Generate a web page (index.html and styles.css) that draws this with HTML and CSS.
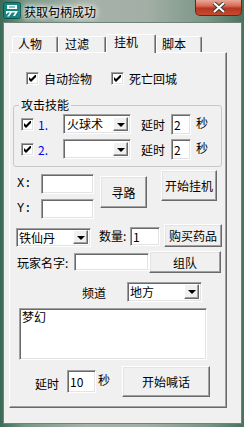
FILE: index.html
```html
<!DOCTYPE html>
<html lang="zh-CN">
<head>
    <meta charset="UTF-8">
    <title>获取句柄成功</title>
    <link rel="stylesheet" href="styles.css">
</head>
<body>
<div class="window">
    <div class="titlebar">
        <svg class="app-icon" viewBox="0 0 18 17">
            <rect x="0.5" y="0.5" width="17" height="16" rx="2" fill="#13857f" stroke="#0b5552"/>
            <path d="M4 3 H14 V7 H4 Z M6 4.5 V5.5 H12 V4.5 Z" fill="#fff" fill-rule="evenodd"/>
            <path d="M3 9 H15 L12 14 H10 L12 10.5 H9 L6 14.5 H4 L7 10.5 H5 L3 12.5 Z" fill="#fff"/>
        </svg>
        <span class="title">获取句柄成功</span>
        <div class="close-btn">
            <svg viewBox="0 0 14 11" width="14" height="11">
                <path d="M2 1 L12 10 M12 1 L2 10" stroke="#3a3a3a" stroke-width="4"/>
                <path d="M2 1 L12 10 M12 1 L2 10" stroke="#fff" stroke-width="2"/>
            </svg>
        </div>
    </div>

    <div class="client">
        <div class="tabs">
            <div class="tab">人物</div>
            <div class="tab tab-wide">过滤</div>
            <div class="tab active">挂机</div>
            <div class="tab">脚本</div>
        </div>

        <div class="panel">
            <div class="opt-row">
                <label class="check first"><span class="box"><svg class="tick" viewBox="0 0 7 7"><polygon points="0,2 2,4 7,-1 7,2 2,7 0,5"/></svg></span>自动捡物</label>
                <label class="check"><span class="box"><svg class="tick" viewBox="0 0 7 7"><polygon points="0,2 2,4 7,-1 7,2 2,7 0,5"/></svg></span>死亡回城</label>
            </div>

            <fieldset class="group">
                <legend>攻击技能</legend>
                <div class="skill-row">
                    <span class="box"><svg class="tick" viewBox="0 0 7 7"><polygon points="0,2 2,4 7,-1 7,2 2,7 0,5"/></svg></span>
                    <span class="num">1.</span>
                    <div class="combo skill-combo"><span class="combo-text">火球术</span><span class="combo-btn"></span></div>
                    <span class="delay-lbl">延时</span>
                    <div class="edit skill-edit">2</div>
                    <span class="sec-lbl">秒</span>
                </div>
                <div class="skill-row">
                    <span class="box"><svg class="tick" viewBox="0 0 7 7"><polygon points="0,2 2,4 7,-1 7,2 2,7 0,5"/></svg></span>
                    <span class="num">2.</span>
                    <div class="combo skill-combo"><span class="combo-text"></span><span class="combo-btn"></span></div>
                    <span class="delay-lbl">延时</span>
                    <div class="edit skill-edit">2</div>
                    <span class="sec-lbl">秒</span>
                </div>
            </fieldset>

            <div class="coord-block">
                <div class="xy">
                    <div class="xy-row"><span class="xy-lbl">X:</span><div class="edit xy-edit"></div></div>
                    <div class="xy-row"><span class="xy-lbl">Y:</span><div class="edit xy-edit"></div></div>
                </div>
                <div class="btn btn-path">寻路</div>
                <div class="btn btn-start">开始挂机</div>
            </div>

            <div class="item-row">
                <div class="combo item-combo"><span class="combo-text">铁仙丹</span><span class="combo-btn"></span></div>
                <span class="qty-lbl">数量:</span>
                <div class="edit qty-edit">1</div>
                <div class="btn btn-buy">购买药品</div>
            </div>

            <div class="player-row">
                <span class="player-lbl">玩家名字:</span>
                <div class="edit player-edit"></div>
                <div class="btn btn-team">组队</div>
            </div>

            <div class="channel-row">
                <span class="channel-lbl">频道</span>
                <div class="combo channel-combo"><span class="combo-text">地方</span><span class="combo-btn"></span></div>
            </div>

            <div class="edit chat-box">梦幻</div>

            <div class="shout-row">
                <span class="shout-lbl">延时</span>
                <div class="edit shout-edit">10</div>
                <span class="shout-sec">秒</span>
                <div class="btn btn-shout">开始喊话</div>
            </div>
        </div>
    </div>
</div>
</body>
</html>
```

FILE: styles.css
```css
body {
    margin: 0;
    font-family: "Noto Sans CJK SC", sans-serif;
    font-size: 12px;
    color: #000;
}

.window {
    width: 244px;
    height: 427px;
    display: flex;
    flex-direction: column;
    background: linear-gradient(90deg, #3b6a56 0%, #789684 10%, #a6b2a9 35%, #a3afa6 60%, #7a9586 85%, #4a725f 100%);
}

/* title bar */
.titlebar {
    height: 22px;
    display: flex;
    align-items: flex-start;
}

.app-icon {
    width: 18px;
    height: 17px;
    margin: 2px 0 0 3px;
}

.title {
    margin: 5px 0 0 3px;
    line-height: 13px;
    text-shadow: 0 0 4px #fff, 0 0 6px #fff, 0 0 8px #e8ece8;
}

.close-btn {
    margin-left: auto;
    margin-right: 2px;
    width: 47px;
    height: 16px;
    box-sizing: border-box;
    border: 1px solid #5c2a20;
    border-top: none;
    border-radius: 0 0 5px 5px;
    background: linear-gradient(#e8a898 0%, #d66b54 40%, #b8351f 55%, #c64a30 100%);
    display: flex;
    align-items: center;
    justify-content: center;
}

/* client area */
.client {
    margin-left: 3px;
    width: 239px;
    height: 402px;
    box-sizing: border-box;
    border: 1px solid #6f8378;
    background: #f0f0f0;
    padding-top: 11px;
}

.tabs {
    display: flex;
    align-items: flex-end;
    height: 18px;
    margin-left: 8px;
}

.tab {
    width: 46px;
    height: 16px;
    box-sizing: border-box;
    border: 1px solid;
    border-color: #fff #696969 transparent #fff;
    border-bottom: none;
    border-radius: 2px 2px 0 0;
    box-shadow: inset -1px 0 0 #a0a0a0;
    padding-left: 5px;
    line-height: 14px;
    background: #f0f0f0;
}

.tab-wide {
    width: 48px;
    padding-left: 6px;
}

.tab.active {
    width: 50px;
    height: 19px;
    margin-bottom: -1px;
    padding-left: 7px;
    position: relative;
    z-index: 1;
}

.panel {
    margin-left: 5px;
    width: 218px;
    height: 356px;
    box-sizing: border-box;
    border: 1px solid;
    border-color: #fff #696969 #696969 #fff;
    box-shadow: inset -1px -1px 0 #a0a0a0;
}

/* classic controls */
.box {
    width: 13px;
    height: 13px;
    flex: none;
    box-sizing: border-box;
    background: #fff;
    border: 1px solid;
    border-color: #a0a0a0 #fff #fff #a0a0a0;
    box-shadow: inset 1px 1px 0 #696969, inset -1px -1px 0 #e3e3e3;
    display: flex;
    align-items: center;
    justify-content: center;
}

.tick {
    width: 7px;
    height: 7px;
    fill: #000;
}

.edit {
    background: #fff;
    box-sizing: border-box;
    border: 1px solid;
    border-color: #a0a0a0 #fff #fff #a0a0a0;
    box-shadow: inset 1px 1px 0 #696969, inset -1px -1px 0 #e3e3e3;
    padding-left: 2px;
    flex: none;
}

.btn {
    background: #f0f0f0;
    box-sizing: border-box;
    border: 1px solid;
    border-color: #fff #696969 #696969 #fff;
    box-shadow: inset -1px -1px 0 #a0a0a0, inset 1px 1px 0 #e3e3e3;
    display: flex;
    align-items: center;
    justify-content: center;
    flex: none;
}

.combo {
    display: flex;
    height: 20px;
    box-sizing: border-box;
    background: #fff;
    border: 1px solid;
    border-color: #a0a0a0 #fff #fff #a0a0a0;
    box-shadow: inset 1px 1px 0 #696969, inset -1px -1px 0 #e3e3e3;
    padding: 2px;
    flex: none;
}

.combo-text {
    flex: 1;
    line-height: 14px;
    padding-left: 1px;
}

.combo-btn {
    width: 15px;
    box-sizing: border-box;
    background: #f0f0f0;
    border: 1px solid;
    border-color: #fff #696969 #696969 #fff;
    box-shadow: inset -1px -1px 0 #a0a0a0;
    display: flex;
    align-items: center;
    justify-content: center;
}

.combo-btn::after {
    content: "";
    border-left: 4px solid transparent;
    border-right: 4px solid transparent;
    border-top: 4px solid #000;
    margin-top: 1px;
}

/* options */
.opt-row {
    display: flex;
    align-items: center;
    height: 13px;
    margin: 19px 0 0 16px;
}

.check {
    display: flex;
    align-items: center;
    gap: 5px;
    line-height: 13px;
}

.check.first {
    width: 85px;
}

.group {
    margin: 14px 0 0 3px;
    width: 209px;
    box-sizing: border-box;
    border: 1px solid #c3c9cc;
    border-radius: 3px;
    padding: 3px 0 7px 0;
    min-width: 0;
}

.group legend {
    margin-left: 5px;
    padding: 0 2px;
    line-height: 12px;
}

.skill-row {
    display: flex;
    align-items: center;
    height: 20px;
}

.skill-row + .skill-row {
    margin-top: 5px;
}

.skill-row .box {
    margin-left: 7px;
}

.num {
    color: #0000ff;
    width: 25px;
    margin-left: 4px;
}

.skill-combo {
    width: 68px;
}

.delay-lbl {
    margin-left: 10px;
}

.skill-edit {
    width: 20px;
    height: 21px;
    margin-left: 6px;
    line-height: 19px;
}

.sec-lbl {
    margin-left: 5px;
    margin-top: -3px;
}

/* coordinates */
.coord-block {
    display: flex;
    align-items: flex-start;
    margin-top: 3px;
}

.xy {
    display: flex;
    flex-direction: column;
    gap: 5px;
    margin: 4px 0 0 7px;
}

.xy-row {
    display: flex;
    align-items: center;
}

.xy-lbl {
    width: 24px;
    font-family: "Liberation Mono", monospace;
}

.xy-edit {
    width: 53px;
    height: 20px;
}

.btn-path {
    width: 47px;
    height: 32px;
    margin: 6px 0 0 6px;
}

.btn-start {
    width: 56px;
    height: 31px;
    margin-left: 14px;
}

/* potion */
.item-row {
    display: flex;
    align-items: flex-start;
    margin-top: 5px;
}

.item-combo {
    width: 75px;
    height: 19px;
    margin: 4px 0 0 6px;
    padding: 1px 2px 2px 1px;
}

.item-combo .combo-text {
    line-height: 15px;
}

.qty-lbl {
    margin: 2px 0 0 8px;
    width: 31px;
    line-height: 20px;
}

.qty-edit {
    width: 30px;
    height: 19px;
    margin-top: 3px;
    line-height: 17px;
}

.btn-buy {
    width: 58px;
    height: 23px;
    margin-left: 4px;
}

/* player */
.player-row {
    display: flex;
    align-items: center;
    height: 22px;
    margin-top: 4px;
}

.player-lbl {
    width: 57px;
    margin-left: 7px;
}

.player-edit {
    width: 75px;
    height: 18px;
}

.btn-team {
    width: 72px;
    height: 22px;
}

/* channel */
.channel-row {
    display: flex;
    align-items: center;
    margin-top: 9px;
}

.channel-lbl {
    width: 45px;
    margin-left: 72px;
}

.channel-combo {
    width: 75px;
    padding: 1px 2px 2px 1px;
}

.channel-combo .combo-text {
    line-height: 16px;
}

.chat-box {
    width: 188px;
    height: 52px;
    margin: 6px 0 0 9px;
    line-height: 14px;
    padding-top: 1px;
}

/* shout */
.shout-row {
    display: flex;
    align-items: center;
    height: 31px;
    margin-top: 6px;
}

.shout-lbl {
    margin-left: 25px;
    margin-top: 4px;
}

.shout-edit {
    width: 29px;
    height: 23px;
    margin-left: 8px;
    line-height: 21px;
}

.shout-sec {
    margin-left: 2px;
    margin-top: -4px;
}

.btn-shout {
    width: 88px;
    height: 31px;
    margin-left: 12px;
}
```
